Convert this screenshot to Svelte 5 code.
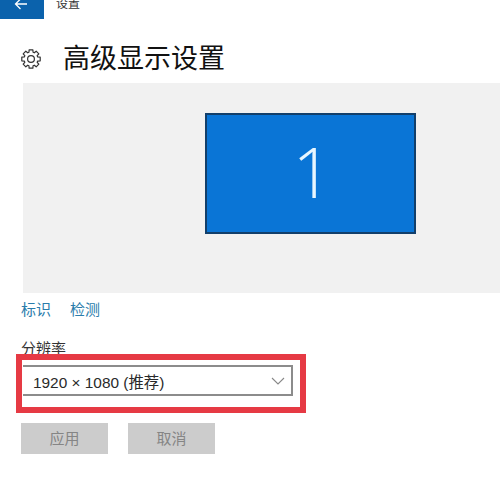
<script>
    const links = ['标识', '检测'];
    const actions = ['应用', '取消'];

    // 8 tooth gear outline, centred on 10,10
    function gearPath(outer, inner) {
        let d = '';
        for (let i = 0; i < 8; i++) {
            const a = (i * Math.PI) / 4;
            const pts = [
                [inner, a - 0.3],
                [outer, a - 0.2],
                [outer, a + 0.2],
                [inner, a + 0.3]
            ];
            for (const [r, t] of pts) {
                const x = (10 + r * Math.cos(t)).toFixed(2);
                const y = (10 + r * Math.sin(t)).toFixed(2);
                d += (d ? 'L' : 'M') + x + ' ' + y;
            }
        }
        return d + 'Z';
    }
    const gear = gearPath(9.4, 7);
</script>

<div class="page">
    <header class="topbar">
        <div class="back">
            <svg width="14" height="14" viewBox="0 0 14 14" fill="none" stroke="#fff" stroke-width="1.3">
                <path d="M13 7H1.500M6.500 2L1.500 7l5 5" />
            </svg>
        </div>
        <span class="crumb">设置</span>
    </header>

    <div class="heading">
        <svg class="gear" width="20" height="20" viewBox="0 0 20 20" fill="none" stroke="#333" stroke-width="1.2" stroke-linejoin="round">
            <path d={gear} />
            <circle cx="10" cy="10" r="3.400" />
        </svg>
        <h1>高级显示设置</h1>
    </div>

    <div class="preview">
        <div class="monitor">1</div>
    </div>

    <nav class="links">
        {#each links as link}
            <span>{link}</span>
        {/each}
    </nav>

    <div class="label">分辨率</div>

    <div class="select">
        <span>1920 × 1080 (推荐)</span>
        <svg width="14" height="8" viewBox="0 0 14 8" fill="none" stroke="#888" stroke-width="1.100">
            <path d="M1 1l6 6 6-6" />
        </svg>
        <div class="highlight"></div>
    </div>

    <div class="actions">
        {#each actions as action}
            <div class="btn">{action}</div>
        {/each}
    </div>
</div>

<style>
    :global(body) {
        background: #fff;
        overflow: hidden;
    }

    .page {
        width: 500px;
        height: 482px;
        overflow: hidden;
        font-family: "Liberation Sans", "Noto Sans CJK SC", sans-serif;
        color: #222;
    }

    .topbar {
        display: flex;
        height: 20px;
    }

    .back {
        width: 44px;
        height: 19px;
        background: #0b62ac;
        display: flex;
        justify-content: center;
    }

    .back svg {
        margin-top: -3px;
        margin-left: -2px;
    }

    .crumb {
        margin-left: 12px;
        margin-top: -5px;
        font-size: 12px;
        line-height: 18px;
        color: #333;
    }

    .heading {
        display: flex;
        align-items: center;
        height: 40px;
        margin-top: 19px;
        padding-left: 21px;
    }

    .heading h1 {
        margin: 0 0 0 22px;
        font-size: 27px;
        font-weight: 400;
        line-height: 40px;
        color: #111;
    }

    .preview {
        margin: 4px 0 0 23px;
        height: 210px;
        background: #f1f1f1;
        padding: 30px 0 0 182px;
        box-sizing: border-box;
    }

    .monitor {
        width: 211px;
        height: 121px;
        box-sizing: border-box;
        border: 2px solid #123f6b;
        background: #0a75d6;
        color: #e8f6ff;
        padding-left: 4px;
        font-family: "Open Sans", sans-serif;
        font-weight: 300;
        font-size: 70px;
        line-height: 112px;
        text-align: center;
    }

    .links {
        display: flex;
        gap: 19px;
        margin: 8px 0 0 21px;
        font-size: 15px;
        line-height: 17px;
        color: #2a7cab;
    }

    .label {
        margin: 21px 0 0 21px;
        font-size: 15px;
        line-height: 20px;
        color: #333;
    }

    .select {
        position: relative;
        display: flex;
        align-items: center;
        justify-content: space-between;
        box-sizing: border-box;
        width: 270px;
        height: 31px;
        margin: 6px 0 0 23px;
        padding: 0 6px 0 10px;
        border: 2px solid #8c8c8c;
        border-left: none;
        font-size: 15.400px;
        color: #2a2a2a;
    }

    .highlight {
        position: absolute;
        left: -7px;
        top: -13px;
        width: 290px;
        height: 59px;
        box-sizing: border-box;
        border: 6px solid #e63a44;
    }

    .actions {
        display: flex;
        gap: 20px;
        margin: 27px 0 0 21px;
    }

    .btn {
        width: 87px;
        height: 31px;
        background: #cccccc;
        color: #858585;
        font-size: 15px;
        line-height: 31px;
        text-align: center;
    }
</style>
